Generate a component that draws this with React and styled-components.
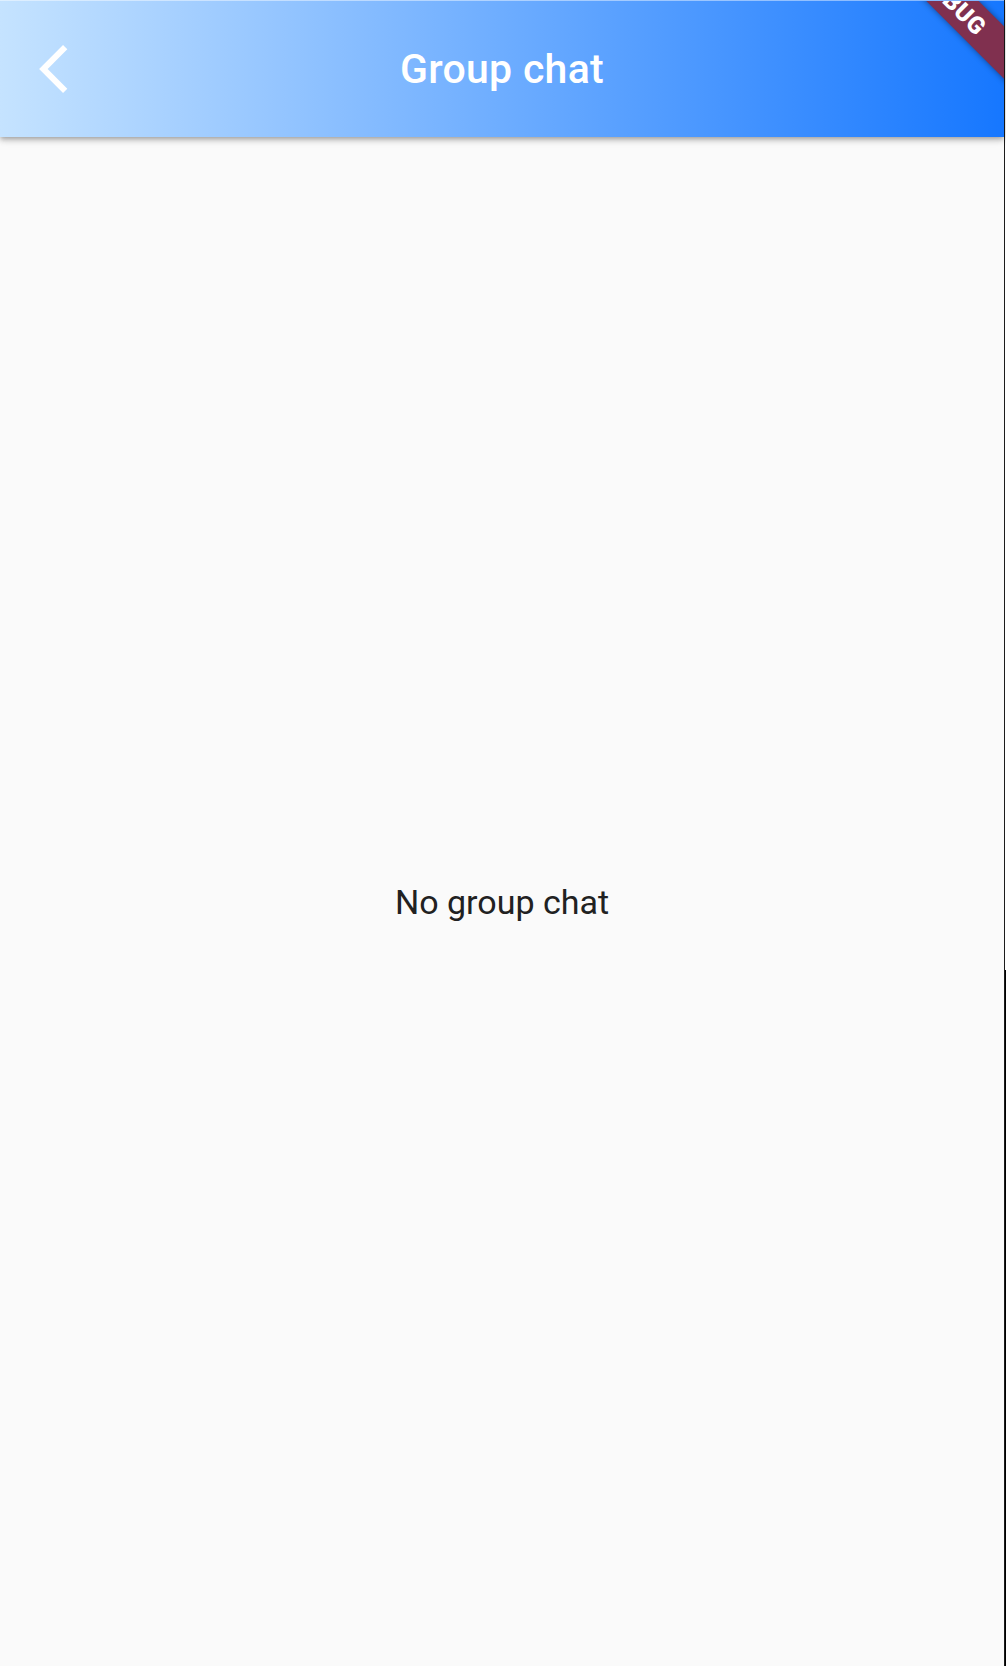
import React from 'react';
import styled, { createGlobalStyle } from 'styled-components';

const GlobalStyle = createGlobalStyle`
  html, body {
    margin: 0;
    padding: 0;
    background: #fafafa;
  }
  body {
    font-family: Roboto, "Noto Sans", "Liberation Sans", sans-serif;
  }
`;

const Page = styled.div`
  display: flex;
  width: 1006px;
  height: 1666px;
  overflow: hidden;
`;

const Screen = styled.div`
  width: 1004px;
  height: 100%;
  display: flex;
  flex-direction: column;
  background: #fafafa;
`;

const Edge = styled.div`
  width: 2px;
  display: flex;
  flex-direction: column;
  border-left: 1px solid #1c1c1c;
  box-sizing: border-box;
`;

const EdgePart = styled.div`
  height: ${p => p.h}px;
  flex: ${p => (p.fill ? 1 : 'none')};
  background: ${p => p.color};
`;

const AppBar = styled.header`
  position: relative;
  z-index: 1;
  height: 137px;
  flex: none;
  display: flex;
  align-items: center;
  justify-content: center;
  overflow: hidden;
  background: linear-gradient(to right, #c5e3ff 0%, #1677ff 100%);
  border-top: 1px solid rgba(255, 255, 255, 0.45);
  box-sizing: border-box;
  box-shadow: 0 2px 4px -1px rgba(0, 0, 0, 0.2), 0 4px 5px 0 rgba(0, 0, 0, 0.14),
    0 1px 10px 0 rgba(0, 0, 0, 0.12);
`;

const BackButton = styled.button`
  position: absolute;
  left: 25px;
  top: 39px;
  width: 58px;
  height: 58px;
  padding: 0;
  border: none;
  background: none;
  color: #fff;
  cursor: pointer;
  svg {
    display: block;
  }
`;

const Title = styled.h1`
  margin: 0;
  font-size: 41px;
  font-weight: 500;
  color: #fff;
  letter-spacing: 0.3px;
`;

const DebugBanner = styled.div`
  position: absolute;
  left: 832px;
  top: -19px;
  width: 240px;
  height: 37px;
  transform: rotate(45deg);
  background: #80304f;
  box-shadow: 0 0 6px rgba(0, 0, 0, 0.45);
  display: flex;
  align-items: center;
  justify-content: center;
  padding-left: 6px;
  box-sizing: border-box;
  color: #fff;
  font-size: 24px;
  font-weight: 900;
  letter-spacing: 0.5px;
`;

const Body = styled.main`
  flex: 1;
  display: flex;
  align-items: center;
  justify-content: center;
`;

const EmptyText = styled.p`
  margin: 0;
  font-size: 34px;
  color: #212121;
`;

const BackIcon = () => (
  <svg width="58" height="58" viewBox="0 0 24 24" fill="currentColor">
    <path d="M17.51 3.87L15.73 2.1 5.84 12l9.9 9.9 1.77-1.77L9.38 12l8.13-8.13z" />
  </svg>
);

export default function App() {
  return (
    <>
      <GlobalStyle />
      <Page>
        <Screen>
          <AppBar>
            <BackButton aria-label="Back">
              <BackIcon />
            </BackButton>
            <Title>Group chat</Title>
            <DebugBanner>DEBUG</DebugBanner>
          </AppBar>
          <Body>
            <EmptyText>No group chat</EmptyText>
          </Body>
        </Screen>
        <Edge>
          <EdgePart h={970} color="#ffffff" />
          <EdgePart fill color="#000000" />
        </Edge>
      </Page>
    </>
  );
}
